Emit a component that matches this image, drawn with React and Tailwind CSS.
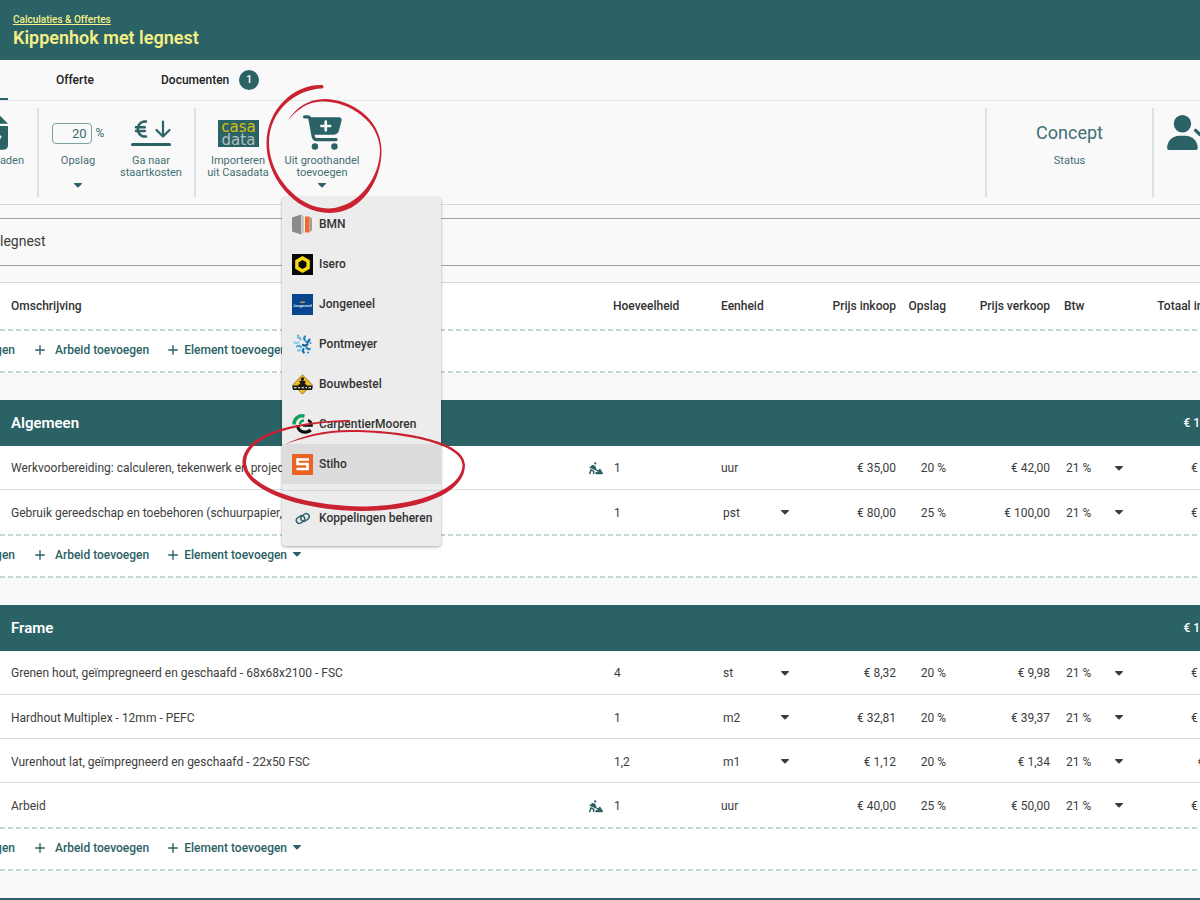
import React from 'react';
import { FaCartPlus, FaEuroSign, FaFileArrowDown, FaPersonDigging, FaUserCheck } from 'react-icons/fa6';

const sections = [
  {
    title: 'Algemeen',
    total: '€ 115,00',
    rows: [
      { name: 'Werkvoorbereiding: calculeren, tekenwerk en projectleiding', labour: true, qty: '1', unit: 'uur', buy: '€ 35,00', markup: '20 %', sell: '€ 42,00', total: '€ 35,00' },
      { name: 'Gebruik gereedschap en toebehoren (schuurpapier, e.d.)', qty: '1', unit: 'pst', buy: '€ 80,00', markup: '25 %', sell: '€ 100,00', total: '€ 80,00' }
    ]
  },
  {
    title: 'Frame',
    total: '€ 107,43',
    rows: [
      { name: 'Grenen hout, geïmpregneerd en geschaafd - 68x68x2100 - FSC', qty: '4', unit: 'st', buy: '€ 8,32', markup: '20 %', sell: '€ 9,98', total: '€ 33,28' },
      { name: 'Hardhout Multiplex - 12mm - PEFC', qty: '1', unit: 'm2', buy: '€ 32,81', markup: '20 %', sell: '€ 39,37', total: '€ 32,81' },
      { name: 'Vurenhout lat, geïmpregneerd en geschaafd - 22x50 FSC', qty: '1,2', unit: 'm1', buy: '€ 1,12', markup: '20 %', sell: '€ 1,34', total: '€ 1,34' },
      { name: 'Arbeid', labour: true, qty: '1', unit: 'uur', buy: '€ 40,00', markup: '25 %', sell: '€ 50,00', total: '€ 40,00' }
    ]
  }
];

const Caret = ({ className = '' }) => (
  <svg viewBox="0 0 8 5" className={`w-2 h-[5px] shrink-0 ${className}`} fill="currentColor" aria-hidden="true">
    <path d="M.6 0h6.8c.6 0 .8.6.4 1L4.6 4.2a.8.8 0 0 1-1.2 0L.2 1C-.2.6 0 0 .6 0z" />
  </svg>
);

const Plus = () => (
  <svg viewBox="0 0 10 10" className="w-2.5 h-2.5 shrink-0" stroke="currentColor" strokeWidth="1.4" strokeLinecap="round" aria-hidden="true">
    <path d="M5 .7v8.6M.7 5h8.6" />
  </svg>
);

/* Supplier logos */
const BmnLogo = () => (
  <svg viewBox="0 0 21 21" className="w-[21px] h-[21px]">
    <path d="M0 3.5 9 .5v20l-9-3z" fill="#8b8b8b" />
    <path d="M9 .5 12 2v17l-3 1.5z" fill="#c9c9c9" />
    <path d="M13 2.5h4.5v16H13z" fill="#f0682a" />
    <path d="M17.5 3 20 4.5v12l-2.5 1.5z" fill="#a9998f" />
  </svg>
);

const IseroLogo = () => (
  <svg viewBox="0 0 21 21" className="w-[21px] h-[21px]">
    <rect width="21" height="21" fill="#080808" />
    <path d="m10.5 4 5.6 3.200v6.600l-5.600 3.200-5.600-3.200V7.200z" fill="none" stroke="#f6d912" strokeWidth="3.400" />
  </svg>
);

const JongeneelLogo = () => (
  <svg viewBox="0 0 21 21" className="w-[21px] h-[21px]">
    <rect width="21" height="21" fill="#08458f" />
    <path d="m8 9 .6-1.800 1.100.8.8-1.500.9 1.500 1.100-.8L13 9z" fill="#c79a4b" />
    <text x="10.500" y="12.500" textAnchor="middle" fontSize="4" fontWeight="700" fill="#d5e2ee" fontFamily="Roboto, sans-serif">Jongeneel</text>
  </svg>
);

const PontmeyerLogo = () => (
  <svg viewBox="0 0 21 21" className="w-[21px] h-[21px]">
    <g fill="none" strokeWidth="2.200" strokeLinecap="round">
      <path d="M6 3.500c1.500-.5 2.500.5 2.500 2" stroke="#6fb5dc" />
      <path d="M13 2.500c-1 1-1.200 2.500 0 3.700" stroke="#2a86c4" />
      <path d="M2.500 8.500c1.500 1 3 .8 4 0" stroke="#8ccbe6" />
      <path d="M17.500 5.500c-.3 1.500-1.500 2.500-3 2.500" stroke="#1b6fae" />
      <path d="M5 12.500c1.500-1.200 3-.8 4 .5" stroke="#4aa8d6" />
      <path d="M11 11c1.500.8 3.500.5 4.500-.8" stroke="#0f5c9c" />
      <path d="M14.500 13.500c.5 1.300 1.800 2 3.300 1.500" stroke="#2a86c4" />
      <path d="M11.500 15c-.8 1-.8 2.500.3 3.500" stroke="#1b6fae" />
      <path d="M6 16.500c.8.300 1.500.1 2-.5" stroke="#7fc4e2" />
    </g>
    <circle cx="6" cy="1.500" r="1" fill="#4aa8d6" />
    <circle cx="18.500" cy="9" r="1" fill="#2a86c4" />
    <circle cx="16" cy="18.500" r=".9" fill="#1b6fae" />
  </svg>
);

const BouwbestelLogo = () => (
  <svg viewBox="0 0 21 21" className="w-[21px] h-[21px]">
    <path d="M10.500.8 20 10.500 10.500 20.200 1 10.500z" fill="#eebd1b" stroke="#5a4c16" strokeWidth=".6" />
    <circle cx="10.500" cy="5" r="1.700" fill="#1b1b1b" />
    <path d="m7 7 3.500-.6L14 7.500l-1.200 2 2.700 2.500h-10L8.300 9z" fill="#1b1b1b" />
    <path d="M0 11.500h21l-1 4.500H1z" fill="#1f1f1f" />
    <path d="M2 13.700h2.500M6 13.700h2M9.500 13.700h2.500M13.500 13.700h1.500M16.500 13.700H19" stroke="#d9d2b4" strokeWidth="1.300" />
  </svg>
);

const CarpentierLogo = () => (
  <svg viewBox="0 0 21 21" className="w-[21px] h-[21px]" fill="none">
    <path d="M2 10.500A8.200 8.200 0 0 1 12.500 2.200" stroke="#12a05c" strokeWidth="3.400" />
    <path d="M8 10.500c0-2 1.500-3.800 4-4" stroke="#12a05c" strokeWidth="2.400" />
    <path d="M5.500 11c.3 4.800 3.800 7.500 8 7.200 2.500-.2 4-1 5.200-2.200" stroke="#0c0c0c" strokeWidth="3.200" />
    <path d="M11 11.500h8.500c0-2.500-1.200-4.500-3.500-5.300" stroke="#0c0c0c" strokeWidth="2.600" />
  </svg>
);

const StihoLogo = () => (
  <svg viewBox="0 0 21 21" className="w-[21px] h-[21px]">
    <rect width="21" height="21" fill="#e96424" />
    <path d="M17 5.500H5.500v4.500H15.500v5H4.500" fill="none" stroke="#fff" strokeWidth="2.600" />
  </svg>
);

const LinkIcon = () => (
  <svg viewBox="0 0 21 21" className="w-[21px] h-[21px] shrink-0" fill="none" stroke="#2b6265" strokeWidth="1.400">
    <rect x="4" y="8.500" width="9" height="6" rx="3" transform="rotate(-38 8.500 11.500)" />
    <rect x="8.500" y="6.500" width="9" height="6" rx="3" transform="rotate(-38 13 9.500)" />
  </svg>
);

const suppliers = [
  { name: 'BMN', logo: BmnLogo },
  { name: 'Isero', logo: IseroLogo },
  { name: 'Jongeneel', logo: JongeneelLogo },
  { name: 'Pontmeyer', logo: PontmeyerLogo },
  { name: 'Bouwbestel', logo: BouwbestelLogo },
  { name: 'CarpentierMooren', logo: CarpentierLogo },
  { name: 'Stiho', logo: StihoLogo, active: true }
];

const Dashes = () => (
  <div className="h-0.5 bg-[repeating-linear-gradient(90deg,#c6d7d7_0_5px,transparent_5px_8px)]" />
);

const AddButtons = () => (
  <tr>
    <td colSpan={8} className="p-0">
      <Dashes />
      <div className="flex items-center h-10 pb-0.5 font-medium text-[#2b6265] whitespace-nowrap">
        <button type="button" className="w-[15px] mr-5 flex justify-end overflow-hidden">toevoegen</button>
        <button type="button" className="flex items-center gap-2.5 mr-[19px]"><Plus />Arbeid toevoegen</button>
        <button type="button" className="flex items-center gap-1.5"><Plus />Element toevoegen<Caret /></button>
      </div>
      <Dashes />
    </td>
  </tr>
);

const CellSelect = ({ label, value, options, className }) => (
  <div className={`relative flex items-center ${className}`}>
    <select aria-label={label} defaultValue={value} className="appearance-none w-full bg-transparent px-0.5 outline-none">
      {options.map((o) => <option key={o}>{o}</option>)}
    </select>
    <Caret className="absolute right-0 pointer-events-none" />
  </div>
);

const Row = ({ row }) => (
  <tr className="h-11 border-b border-[#d3dcdd] last:border-b-0 *:pt-0.5">
    <td className="pl-[11px] pr-0.5">
      <div className="flex items-center justify-between whitespace-nowrap">
        <span>{row.name}</span>
        {row.labour && <FaPersonDigging size={14} className="text-[#2b6265]" />}
      </div>
    </td>
    <td className="pl-[9px]">{row.qty}</td>
    <td className="pl-2">
      {row.labour ? row.unit : (
        <CellSelect label="Eenheid" value={row.unit} options={['pst', 'st', 'm1', 'm2', 'uur']} className="w-[68px]" />
      )}
    </td>
    <td className="pr-2 text-right">{row.buy}</td>
    <td className="pr-2 text-right">{row.markup}</td>
    <td className="pr-2 text-right">{row.sell}</td>
    <td className="pl-1.5">
      <CellSelect label="Btw" value="21 %" options={['21 %', '9 %', '0 %']} className="w-[59px]" />
    </td>
    <td className="pr-2 text-right">{row.total}</td>
  </tr>
);

const Label = ({ children }) => (
  <span className="h-6 mt-1 text-[11px] leading-3 text-center whitespace-nowrap">{children}</span>
);

const SupplierMenu = () => (
  <div role="menu" className="absolute left-1 top-full z-10 w-[159px] pt-[7px] pb-2 rounded bg-[#ececec] shadow-[0_1px_3px_rgba(0,0,0,0.35)] text-xs font-medium text-[#333]">
    {suppliers.map(({ name, logo: Logo, active }) => (
      <button
        key={name}
        type="button"
        role="menuitem"
        className={`w-full h-10 px-2.5 flex items-center gap-1.5 ${active ? 'bg-[#dcdcdc]' : ''}`}
      >
        <Logo />
        {name}
      </button>
    ))}
    <div className="mt-1.5 mb-[7px] border-t border-[#cfd8d9]" />
    <button type="button" role="menuitem" className="w-full h-10 pl-2.5 flex items-center gap-1.5 whitespace-nowrap">
      <LinkIcon />
      Koppelingen beheren
    </button>
  </div>
);

const Toolbar = () => (
  <div className="flex h-[104px] py-[7px] border-b border-[#d3dcdd] text-[#3f7073]">
    <button type="button" className="w-[39px] pt-[7px] pr-[13px] border-r-2 border-[#dbe2e3] flex flex-col items-end overflow-hidden">
      <span className="h-9 mr-4">
        <FaFileArrowDown className="w-[26px] h-[35px] text-[#2b6265]" />
      </span>
      <Label>Downloaden</Label>
    </button>

    <div className="flex gap-0.5 pl-1 pr-[7px] border-r-2 border-[#dbe2e3]">
      <div className="w-[70px] pt-[7px] flex flex-col items-center">
        <div className="h-9 flex items-center gap-1 text-xs">
          <input id="opslag" defaultValue="20" className="w-10 h-[21px] px-1 rounded border border-[#7fa0a2] bg-transparent text-right text-[13px]" />
          %
        </div>
        <Label><label htmlFor="opslag">Opslag</label></Label>
        <Caret className="mt-1 text-[#2b6265]" />
      </div>
      <button type="button" className="w-[72px] pt-[7px] flex flex-col items-center">
        <span className="h-9 pt-1 flex flex-col items-center gap-1 text-[#2b6265]">
          <span className="flex items-center gap-1">
            <FaEuroSign size={20} />
            <svg viewBox="0 0 16 18" className="w-4 h-[18px]" fill="none" stroke="currentColor" strokeWidth="2.200" strokeLinecap="round" strokeLinejoin="round">
              <path d="M8 1.500v15M1.500 10 8 16.500 14.500 10" />
            </svg>
          </span>
          <span className="w-10 h-[3px] rounded-full bg-current" />
        </span>
        <Label>Ga naar<br />staartkosten</Label>
      </button>
    </div>

    <div className="flex px-1">
      <button type="button" className="w-[76px] mr-0.5 pt-[7px] flex flex-col items-center">
        <span className="h-9 flex items-center">
          <svg viewBox="0 0 41 27" className="w-[41px] h-[27px]" fontFamily="'DejaVu Sans', sans-serif" fontSize="15" textAnchor="middle">
            <rect width="41" height="27" fill="#2b6265" />
            <text x="20.500" y="25" fill="#b4c0c0">data</text>
            <text x="20.500" y="12" fill="#d8bd13">casa</text>
          </svg>
        </span>
        <Label>Importeren<br />uit Casadata</Label>
      </button>
      <div className="relative w-[88px]">
        <button type="button" aria-haspopup="menu" className="w-full pt-[7px] flex flex-col items-center">
          <span className="h-9">
            <FaCartPlus className="w-[39px] h-[35px] text-[#2b6265]" />
          </span>
          <Label>Uit groothandel<br />toevoegen</Label>
          <Caret className="mt-1 text-[#2b6265]" />
        </button>
        <SupplierMenu />
      </div>
    </div>

    <div className="ml-auto flex">
      <button type="button" className="w-[169px] pt-[7px] border-x-2 border-[#dbe2e3] flex flex-col items-center">
        <span className="h-9 flex items-center text-lg">Concept</span>
        <Label>Status</Label>
      </button>
      <button type="button" aria-label="Klant" className="w-[46px] pt-[7px] pl-[13px] flex items-start overflow-hidden">
        <FaUserCheck className="w-11 h-[35px] shrink-0 text-[#2b6265]" />
      </button>
    </div>
  </div>
);

/* Hand-drawn highlights around the cart button and the Stiho entry */
const Markers = () => (
  <svg viewBox="0 0 500 540" width="500" height="540" className="absolute left-0 top-0 z-20 pointer-events-none" fill="#cb2232" aria-hidden="true">
    <path d="M322 85C295 84 267 108 266.500 143 266 175 293 213 330 213 362 213 382 180 381.500 150 381 118 350 99 325 99 308 99 296 108 288 120 297 110 308 101 323 101.500 350 101.500 379.500 122 380 150 380 176 360 207 329 208.500 298 209 269 175 269 143 269 110 297 89 322 88.500c2-.3 2-3.300 0-3.500z" />
    <path d="M350 420C320 420 242 427 242.500 463 243 490 300 511 362 511 415 511 465 495 465 465 464.500 440 400 430 350 430 325 430 300 436 285 444.500 302 438 325 432 350 432 400 432 462 443 462.500 465 462 490 415 506 362 506.500 305 506 247 488 246 463 246 432 310 422 350 421.500z" />
  </svg>
);

const App = () => (
  <div className="relative min-h-screen overflow-hidden bg-[#f9f9f9] font-['Roboto',sans-serif] text-xs text-[#3d3d3d]">
    <header className="h-[60px] pt-3.5 px-[13px] bg-[#2b6265] text-[#f6ef85]">
      <a href="#calculaties" className="block w-fit text-[10px] leading-3 font-medium underline">Calculaties &amp; Offertes</a>
      <h1 className="text-lg leading-6 font-semibold">Kippenhok met legnest</h1>
    </header>

    <nav className="flex items-center h-[41px] border-b border-[#dfe8e9] font-medium text-[#222]">
      <a href="#calculatie" aria-label="Calculatie" className="self-stretch w-2 mr-12 border-b-2 border-[#2b6265]" />
      <a href="#offerte" className="mr-[67px]">Offerte</a>
      <a href="#documenten" className="flex items-center gap-2.5">
        Documenten
        <span className="w-5 h-5 rounded-full bg-[#2b6265] text-white text-[11px] flex items-center justify-center">1</span>
      </a>
    </nav>

    <Toolbar />

    <input
      aria-label="Omschrijving offerte"
      defaultValue="legnest"
      className="block w-full h-12 pb-0.5 mt-[13px] mb-4 border-y border-[#9aa5a6] bg-transparent text-sm outline-none"
    />

    <table className="w-[calc(100%+38px)] table-fixed border-collapse border-t border-[#d3dcdd]">
      <colgroup>
        <col />
        <col className="w-[108px]" />
        <col className="w-24" />
        <col className="w-[95px]" />
        <col className="w-[50px]" />
        <col className="w-[104px]" />
        <col className="w-[72px]" />
        <col className="w-[108px]" />
      </colgroup>
      <thead className="bg-white">
        <tr className="h-[46px] text-left whitespace-nowrap text-[#333] *:font-medium">
          <th className="pl-[11px]">Omschrijving</th>
          <th className="pl-2">Hoeveelheid</th>
          <th className="pl-2">Eenheid</th>
          <th className="pr-2 text-right">Prijs inkoop</th>
          <th className="pr-2 text-right">Opslag</th>
          <th className="pr-2 text-right">Prijs verkoop</th>
          <th className="pl-1.5">Btw</th>
          <th className="pr-2 text-right">Totaal inkoop</th>
        </tr>
        <AddButtons />
      </thead>
      {sections.map((section) => (
        <React.Fragment key={section.title}>
          <tbody>
            <tr className="h-[27px]"><td colSpan={8} /></tr>
            <tr className="h-[46px] bg-[#2b6265] text-white">
              <th colSpan={7} className="pl-[11px] pt-0.5 text-left text-[15px] font-semibold">{section.title}</th>
              <td className="pr-2 text-right font-medium">{section.total}</td>
            </tr>
          </tbody>
          <tbody className="bg-white">
            {section.rows.map((row) => <Row key={row.name} row={row} />)}
          </tbody>
          <tbody className="bg-white">
            <AddButtons />
          </tbody>
        </React.Fragment>
      ))}
      <tbody>
        <tr className="h-[27px]"><td colSpan={8} /></tr>
        <tr className="h-[46px] bg-[#2b6265]"><td colSpan={8} /></tr>
      </tbody>
    </table>

    <Markers />
  </div>
);

export default App;
